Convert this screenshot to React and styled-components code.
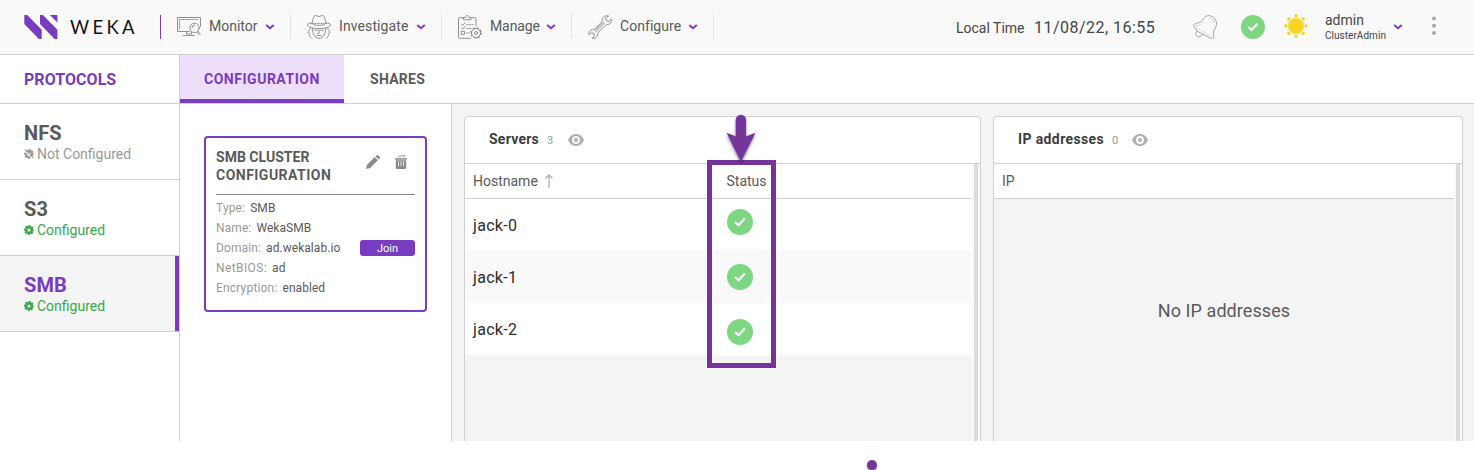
import React from "react";
import styled, { createGlobalStyle, css } from "styled-components";

const purple = "#793cc0";
const line = "#d0d0d0";

const Global = createGlobalStyle`
  *, *::before, *::after { box-sizing: border-box; }
  body {
    margin: 0;
    background: #fff;
    color: #5a5a5a;
    font-family: Roboto, "Liberation Sans", sans-serif;
    font-size: 14px;
    overflow: hidden;
  }
  svg { display: block; flex: none; }
`;

const Page = styled.div`
  position: relative;
  width: 1474px;
  height: 470px;
  overflow: hidden;
`;

/* ---------- top bar ---------- */
const TopBar = styled.header`
  display: flex;
  align-items: flex-start;
  height: 55px;
  background: #f9f9f9;
  border-bottom: 1px solid ${line};
`;
const Brand = styled.div`
  display: flex;
  width: 160px;
  padding: 15px 0 0 24px;
`;
const Wordmark = styled.span`
  margin: 0 0 0 12px;
  font: 400 18.5px/24px Lato, sans-serif;
  letter-spacing: 3.3px;
  color: #111;
`;
const BrandRule = styled.i`
  width: 1px;
  height: 24px;
  margin-top: 15px;
  background: ${purple};
`;
const NavItem = styled.div`
  display: flex;
  align-items: center;
  width: ${(p) => p.$width}px;
  height: 25px;
  margin-top: 14px;
  padding-left: 16px;
  border-right: 1px solid #e2e2e2;
`;
const NavLabel = styled.span`
  width: ${(p) => p.$width}px;
  margin-left: 8px;
  padding-bottom: 2px;
  line-height: 18px;
  white-space: nowrap;
  letter-spacing: ${(p) => p.$track || 0}px;
`;
const Clock = styled.div`
  display: flex;
  align-items: baseline;
  margin: 17px 0 0 242px;
  width: 236px;
  line-height: 22px;
  color: #464646;
  white-space: nowrap;
`;
const ClockLabel = styled.span`
  width: 78px;
`;
const ClockTime = styled.span`
  font-size: 16px;
  letter-spacing: 0.47px;
`;
const Tools = styled.div`
  display: flex;
  padding-top: 15px;
`;
const User = styled.div`
  width: 68px;
  margin: -4px 0 0 17px;
  color: #464646;
`;
const UserName = styled.div`
  font-size: 14px;
  line-height: 18px;
`;
const UserRole = styled.div`
  font-size: 10px;
  line-height: 13px;
  letter-spacing: 0.04px;
`;
const Spot = styled.span`
  margin: ${(p) => p.$m};
`;

/* ---------- body ---------- */
const Body = styled.div`
  display: flex;
  height: 386px;
`;
const Sidebar = styled.nav`
  width: 180px;
  border-right: 1px solid ${line};
`;
const SideTitle = styled.div`
  height: 49px;
  padding-left: 24px;
  border-bottom: 1px solid ${line};
  font-size: 16px;
  font-weight: 700;
  line-height: 49px;
  color: ${purple};
  letter-spacing: 0.05px;
`;
const Protocol = styled.div`
  height: 76px;
  padding: 17px 0 0 24px;
  border-bottom: 1px solid ${line};
  ${(p) => p.$active && css`
    background: #f4f4f4;
    box-shadow: inset -4px 0 0 ${purple};
  `}
`;
const ProtocolName = styled.div`
  font-size: 20px;
  font-weight: 700;
  line-height: 24px;
  color: ${(p) => (p.$active ? purple : "#5a5a5a")};
  letter-spacing: 0.1px;
`;
const ProtocolState = styled.div`
  display: flex;
  align-items: center;
  gap: 3px;
  line-height: 18px;
  color: ${(p) => (p.$on ? "#37a849" : "#999")};
`;
const Content = styled.main`
  flex: 1;
  display: flex;
  flex-direction: column;
`;
const Tabs = styled.div`
  display: flex;
  height: 49px;
  border-bottom: 1px solid ${line};
`;
const Tab = styled.div`
  height: 48px;
  width: ${(p) => p.$width}px;
  padding-left: ${(p) => p.$pad}px;
  font-weight: 700;
  line-height: 49px;
  letter-spacing: ${(p) => p.$track}px;
  ${(p) => p.$active && css`
    background: #eddffb;
    color: ${purple};
    box-shadow: inset 0 -4px 0 ${purple};
  `}
`;
const Split = styled.div`
  display: flex;
  flex: 1;
`;
const ConfigColumn = styled.section`
  width: 272px;
  padding: 32px 0 0 24px;
  border-right: 1px solid ${line};
`;
const Card = styled.div`
  width: 223px;
  height: 176px;
  padding: 10px;
  border: 2px solid ${purple};
  border-radius: 4px;
`;
const CardHead = styled.div`
  display: flex;
  height: 47px;
  border-bottom: 1px solid #8b8b8b;
`;
const CardTitle = styled.div`
  width: 149px;
  font-weight: 700;
  line-height: 18px;
`;
const CardLine = styled.div`
  white-space: nowrap;
  letter-spacing: ${(p) => p.$track}px;
`;
const Field = styled.div`
  display: flex;
  align-items: center;
  gap: 5px;
  height: 20px;
  font-size: 12px;
  color: #999;
  white-space: nowrap;
`;
const Fields = styled.div`
  padding-top: 3px;
`;
const FieldName = styled.span`
  letter-spacing: ${(p) => p.$track}px;
`;
const FieldValue = styled.span`
  color: #5a5a5a;
  letter-spacing: 0.05px;
`;
const JoinButton = styled.button`
  width: 55px;
  height: 16px;
  margin-left: auto;
  padding: 1px 0 0;
  border: 0;
  border-radius: 3px;
  background: ${purple};
  color: #fff;
  font: 11px/15px Roboto, sans-serif;
`;
const Panels = styled.section`
  display: flex;
  flex: 1;
  gap: 12px;
  padding: 12px 11px 0 12px;
  background: #f4f4f4;
`;
const Panel = styled.div`
  width: ${(p) => p.$width}px;
  border: 1px solid ${line};
  border-bottom: 0;
  border-radius: 4px 4px 0 0;
`;
const PanelHead = styled.div`
  display: flex;
  align-items: center;
  height: 47px;
  padding-left: 24px;
  border-bottom: 1px solid ${line};
  border-radius: 4px 4px 0 0;
  background: #fff;
`;
const PanelTitle = styled.span`
  width: ${(p) => p.$width}px;
  padding-bottom: 2px;
  font-weight: 700;
  color: #3c3c3c;
  letter-spacing: ${(p) => p.$track}px;
`;
const Count = styled.span`
  width: ${(p) => p.$width}px;
  padding-top: 1px;
  font-size: 11px;
  color: #999;
`;
const Scroller = styled.div`
  display: flex;
  height: 277px;
  padding-right: 2px;
  background: #fafafa;
`;
const Table = styled.div`
  flex: 1;
  background: #f4f4f4;
`;
const Track = styled.i`
  width: 4px;
  margin-left: 2px;
  background: #dcdcdc;
`;
const HeadRow = styled.div`
  display: flex;
  align-items: center;
  height: 35px;
  padding-left: 8px;
  border-bottom: 1px solid ${line};
  background: #fff;
`;
const HeadCell = styled.span`
  display: flex;
  align-items: center;
  gap: 7px;
  width: ${(p) => p.$width}px;
`;
const Row = styled.div`
  height: 52px;
  padding-left: 8px;
  background: ${(p) => (p.$alt ? "#f9f9f9" : "#fff")};
  font-size: 16px;
  line-height: 54px;
  color: #2c2c2c;
  letter-spacing: 0.3px;
`;
const Empty = styled.div`
  padding: 99px 0 0 0;
  font-size: 18px;
  line-height: 26px;
  text-align: center;
  letter-spacing: 0.08px;
`;

/* ---------- callouts laid over the page ---------- */
const Highlight = styled.div`
  position: absolute;
  left: 707px;
  top: 160px;
  width: 69px;
  height: 208px;
  padding: 34px 0 0 3px;
  border: 5px solid #76349b;
`;
const StatusCell = styled.div`
  width: 50px;
  height: ${(p) => p.$height}px;
  padding: ${(p) => p.$top}px 0 0 12px;
  background: ${(p) => (p.$alt ? "#f9f9f9" : "#fff")};
`;
const Arrow = styled.div`
  position: absolute;
  left: 721px;
  top: 110px;
`;
const Dot = styled.i`
  position: absolute;
  left: 867px;
  top: 460px;
  width: 10px;
  height: 10px;
  border-radius: 50%;
  background: #76349b;
  box-shadow: 0 2px 3px rgba(0, 0, 0, 0.4);
`;

/* ---------- icons ---------- */
const Logo = () => (
  <svg width="34" height="24" viewBox="0 0 34 24" fill={purple}>
    <path d="M0.3 0H3.2L17.7 14.800V24H14.900L0.3 8.900Z" />
    <path d="M16 0H18.900L33.400 14.800V24H30.600L16 8.900Z" />
    <path d="M25.900 0H33.400V7.500Z" />
  </svg>
);
const Chevron = () => (
  <svg width="10" height="8" viewBox="0 0 10 8" fill="none" stroke={purple} strokeWidth="2">
    <path d="M1.2 1.9 5 5.2 8.8 1.9" />
  </svg>
);
const thin = { fill: "none", stroke: "#858585", strokeWidth: 0.9, strokeLinecap: "round", strokeLinejoin: "round" };
const MonitorIcon = () => (
  <svg width="24" height="24" viewBox="0 0 24 24" {...thin}>
    <path d="M12.200 16.500H.5V2.500h23v9M9.500 16.500v2.500h5v-2M6.500 20.500h11" />
    <path d="M2.500 14V4.500h19" strokeDasharray="1 1.200" />
    <circle cx="17.500" cy="12.900" r="4.700" />
    <path d="M14.900 12.700a2.700 2.700 0 0 1 2.700-2.500M20.900 16.300l2.600 2.600-.9.900-2.600-2.600" />
  </svg>
);
const SpyIcon = () => (
  <svg width="24" height="24" viewBox="0 0 24 24" {...thin}>
    <path d="M4.9 8.3C6 5 6.200 .6 8.500 .5c1.500 0 2 1 3.500 1S14 .5 15.500 .5C17.800 .6 18 5 19.100 8.300M4.900 8.300C3 7.600 .5 8.500 .5 10c0 2 5 3.600 11.500 3.600S23.500 12 23.500 10c0-1.500-2.500-2.400-4.400-1.700M4.900 8.300c1 2.900 13.200 2.900 14.200 0" />
    <path d="M6.300 8.400h11.500" strokeDasharray=".8 1.200" />
    <path d="M5.500 13.300c0 6 2.300 10.100 6.500 10.100s6.500-4.100 6.500-10.100M7.700 15.200h2.600M13.700 15.200h2.600M12 15v3.500h-1.200M9.700 20.600h4.600M3.300 13c-.2 2.500-2 3.500-2.500 4.300 1.200.2 1.700.4 1.400 1.400-.3 1.200.4 2.300 2 4.400M20.700 13c.2 2.500 2 3.500 2.500 4.300-1.200.2-1.700.4-1.400 1.400.3 1.200-.4 2.300-2 4.400" />
  </svg>
);
const ClipboardIcon = () => (
  <svg width="24" height="24" viewBox="0 0 24 24" {...thin}>
    <path d="M12.500 23.300H1.500a1 1 0 0 1-1-1V3.700a1 1 0 0 1 1-1h4M13 2.700h4a1 1 0 0 1 1 1v7.200M5.500 4.300V2.500h2C7.500 1.300 8.200.5 9.200.5s1.700.8 1.700 2h2v1.800z" />
    <path d="M3.500 9.200l1.200 1.100 2.400-2.500M3.500 13l1.200 1.100 2.400-2.500M3.600 16.300h3v3h-3z" />
    <path d="M8.500 9.700h7M8.500 13.500h4.500M8.500 18h3" strokeDasharray=".8 1.200" />
    <circle cx="18" cy="18" r="4.500" />
    <circle cx="18" cy="18" r="1.500" />
    <circle cx="18" cy="18" r="5.200" strokeDasharray="2 2.080" strokeWidth="1.200" strokeLinecap="butt" />
  </svg>
);
const WrenchIcon = () => (
  <svg width="24" height="24" viewBox="0 0 24 24" {...thin}>
    <path d="M20.200.9c-2.300-.8-5.500.5-5.700 3.300-.1 1-.1 1.800-.5 2.400L6.800 14c-.7.500-1.500.4-2.300.5-2.600.2-4.300 3-3.600 5.200l2.300-1.900 2.600.6.700 2.400-2.300 2.300c2.700.8 5.300-.8 5.700-3.500.1-.9 0-1.800.6-2.400l7-7c.7-.6 1.500-.5 2.400-.6 2.600-.4 4-3.200 3.400-5.600L21 6.400l-2.600-.7-.8-2.400z" />
    <path d="M7.800 16.700l8.700-8.700M6.800 15.500l8.500-8.500" />
  </svg>
);
const Bell = () => (
  <svg width="24" height="24" viewBox="0 0 24 24" fill="none" stroke="#a2a2a2" strokeWidth="1" strokeLinejoin="round">
    <path d="M1.500 9.200C.3 9.800.2 11 .9 11.700l4.200 5.100 12.700 6.400c1 .5 2.400.5 2.700-.6.600-2.200-.5-4.600.4-7 .7-1.800 2.500-3.400 2.700-6.200C23.900 5 20.300.8 15.600.6c-2.500-.1-4.500 2.200-6.300 4.800C7.500 7.900 4 8 1.500 9.200Z" />
    <path d="M4.200 16a3.200 3.200 0 1 0 5 2.900" />
    <path d="M3 10.800c3-1 5.500-.5 8-4M16.500 3c2.500.5 4 2 4.500 4.500M4 12.800l13 8" strokeDasharray="1 1.500" strokeWidth=".8" />
  </svg>
);
const Check = ({ size }) => (
  <svg width={size} height={size} viewBox="0 0 24 24">
    <circle cx="12" cy="12" r="12" fill="#7dd780" />
    <path d="M7.500 12 10.700 15 16.500 8.700" fill="none" stroke="#fff" strokeWidth="2" />
  </svg>
);
const Sun = () => (
  <svg width="24" height="24" viewBox="0 0 24 24" fill="#f8d423">
    <circle cx="12" cy="12" r="8" />
    {[[12, 1.800], [19.200, 4.800], [22.200, 12], [19.200, 19.200], [12, 22.200], [4.800, 19.200], [1.800, 12], [4.800, 4.800]].map(([x, y]) => (
      <circle key={`${x}-${y}`} cx={x} cy={y} r="1.700" />
    ))}
  </svg>
);
const Kebab = () => (
  <svg width="4" height="20" viewBox="0 0 4 20" fill="#a8a8a8">
    <circle cx="2" cy="2.500" r="2" />
    <circle cx="2" cy="9.800" r="2" />
    <circle cx="2" cy="17" r="2" />
  </svg>
);
const Gear = ({ off }) => (
  <svg width="10" height="10" viewBox="0 0 10 10" fill="none">
    <circle cx="5" cy="5" r="2.800" stroke="currentColor" strokeWidth="2.400" />
    <circle cx="5" cy="5" r="4.200" stroke="currentColor" strokeWidth="1.600" strokeDasharray="1.900 1.399" strokeDashoffset=".95" />
    {off && <path d="M0 1.200 9 10" stroke="#fff" strokeWidth="1.200" />}
    {off && <path d="M.4 0 10 9.500" stroke="currentColor" strokeWidth="1" />}
  </svg>
);
const Pencil = () => (
  <svg width="14" height="14" viewBox="0 0 14 14" fill="#8a8a8a">
    <path d="M0 14 .9 9.900 8.700 2.100l3.200 3.200L4.100 13.100ZM9.500 1.300 10.400.5C11 0 11.800 0 12.400.5l1.100 1.100c.6.600.6 1.400 0 2l-.8.900Z" />
  </svg>
);
const Trash = () => (
  <svg width="12" height="14" viewBox="0 0 12 14" fill="#8a8a8a">
    <path d="M0 3.300h12v1.500H0zM.8 5.200h10.400v7.300c0 .8-.6 1.500-1.500 1.500H2.300c-.9 0-1.500-.7-1.500-1.500z" />
    <path d="M2.500 2.400C4 .8 8.500.2 10.500.8M8 2.500l1.500-.8" fill="none" stroke="#8a8a8a" strokeWidth=".9" />
    <path d="M3.500 6.400v4.800M6 6.400v4.800M8.500 6.400v4.800" stroke="#fff" strokeWidth=".8" />
  </svg>
);
const Eye = () => (
  <svg width="16" height="12" viewBox="0 0 16 12">
    <path d="M0 6C1.500 2.200 4.500 0 8 0s6.500 2.200 8 6c-1.500 3.800-4.500 6-8 6S1.500 9.800 0 6Z" fill="#b0b0b0" />
    <circle cx="8" cy="6" r="3.900" fill="#fff" />
    <circle cx="8" cy="6" r="2" fill="#b0b0b0" />
  </svg>
);
const SortUp = () => (
  <svg width="8" height="14" viewBox="0 0 8 14" fill="none" stroke="#aaa" strokeWidth="1.200">
    <path d="M4 14V1M.5 4.500 4 .9 7.500 4.500" />
  </svg>
);
const ArrowDown = () => (
  <svg width="40" height="56" viewBox="0 0 40 56">
    <defs>
      <filter id="soft" x="-30%" y="-20%" width="160%" height="140%">
        <feDropShadow dx="0" dy="2" stdDeviation="1.500" floodOpacity=".45" />
      </filter>
    </defs>
    <path filter="url(#soft)" fill="#76349b" d="M14.700 10a5.200 5.200 0 0 1 10.400 0V26.300L34.500 22.800 19.900 52 5.500 22.800 14.700 26.300Z" />
  </svg>
);

const nav = [
  { name: "Monitor", Icon: MonitorIcon, width: 130, label: 56, track: 0 },
  { name: "Investigate", Icon: SpyIcon, width: 151, label: 77, track: 0.1 },
  { name: "Manage", Icon: ClipboardIcon, width: 130, label: 56, track: -0.1 },
  { name: "Configure", Icon: WrenchIcon, width: 142, label: 68, track: 0.05 },
];

const fields = [
  { name: "Type:", value: "SMB", track: 0.15 },
  { name: "Name:", value: "WekaSMB", track: 0.1 },
  { name: "Domain:", value: "ad.wekalab.io", track: 0.12, action: "Join" },
  { name: "NetBIOS:", value: "ad", track: 0.4 },
  { name: "Encryption:", value: "enabled", track: 0.18 },
];

export default function App() {
  return (
    <Page>
      <Global />
      <TopBar>
        <Brand>
          <Logo />
          <Wordmark>WEKA</Wordmark>
        </Brand>
        <BrandRule />
        {nav.map(({ name, Icon, width, label, track }) => (
          <NavItem key={name} $width={width}>
            <Icon />
            <NavLabel $width={label} $track={track}>{name}</NavLabel>
            <Chevron />
          </NavItem>
        ))}
        <Clock>
          <ClockLabel>Local Time</ClockLabel>
          <ClockTime>11/08/22, 16:55</ClockTime>
        </Clock>
        <Tools>
          <Spot $m="0 0 0 1px"><Bell /></Spot>
          <Spot $m="0 0 0 24px"><Check size={24} /></Spot>
          <Spot $m="-1px 0 0 19px"><Sun /></Spot>
          <User>
            <UserName>admin</UserName>
            <UserRole>ClusterAdmin</UserRole>
          </User>
          <Spot $m="8px 0 0 0"><Chevron /></Spot>
          <Spot $m="1px 0 0 29px"><Kebab /></Spot>
        </Tools>
      </TopBar>
      <Body>
        <Sidebar>
          <SideTitle>PROTOCOLS</SideTitle>
          <Protocol>
            <ProtocolName>NFS</ProtocolName>
            <ProtocolState><Gear off />Not Configured</ProtocolState>
          </Protocol>
          <Protocol>
            <ProtocolName>S3</ProtocolName>
            <ProtocolState $on><Gear />Configured</ProtocolState>
          </Protocol>
          <Protocol $active>
            <ProtocolName $active>SMB</ProtocolName>
            <ProtocolState $on><Gear />Configured</ProtocolState>
          </Protocol>
        </Sidebar>
        <Content>
          <Tabs>
            <Tab $active $width={164} $pad={24} $track={0.52}>CONFIGURATION</Tab>
            <Tab $width={120} $pad={26} $track={0.28}>SHARES</Tab>
          </Tabs>
          <Split>
            <ConfigColumn>
              <Card>
                <CardHead>
                  <CardTitle>
                    <CardLine $track={0.02}>SMB CLUSTER</CardLine>
                    <CardLine $track={0.48}>CONFIGURATION</CardLine>
                  </CardTitle>
                  <Spot $m="7px 0 0 1px"><Pencil /></Spot>
                  <Spot $m="7px 0 0 15px"><Trash /></Spot>
                </CardHead>
                <Fields>
                  {fields.map(({ name, value, track, action }) => (
                    <Field key={name}>
                      <FieldName $track={track}>{name}</FieldName>
                      <FieldValue>{value}</FieldValue>
                      {action && <JoinButton>{action}</JoinButton>}
                    </Field>
                  ))}
                </Fields>
              </Card>
            </ConfigColumn>
            <Panels>
              <Panel $width={517}>
                <PanelHead>
                  <PanelTitle $width={58} $track={0.25}>Servers</PanelTitle>
                  <Count $width={21}>3</Count>
                  <Eye />
                </PanelHead>
                <Scroller>
                  <Table>
                    <HeadRow>
                      <HeadCell $width={253.5}>Hostname<SortUp /></HeadCell>
                      <HeadCell $width={80}>Status</HeadCell>
                    </HeadRow>
                    <Row>jack-0</Row>
                    <Row $alt>jack-1</Row>
                    <Row>jack-2</Row>
                  </Table>
                  <Track />
                </Scroller>
              </Panel>
              <Panel $width={470}>
                <PanelHead>
                  <PanelTitle $width={94} $track={0.38}>IP addresses</PanelTitle>
                  <Count $width={20}>0</Count>
                  <Eye />
                </PanelHead>
                <Scroller>
                  <Table>
                    <HeadRow>
                      <HeadCell $width={80}>IP</HeadCell>
                    </HeadRow>
                    <Empty>No IP addresses</Empty>
                  </Table>
                  <Track />
                </Scroller>
              </Panel>
            </Panels>
          </Split>
        </Content>
      </Body>
      <Highlight>
        <StatusCell $height={51} $top={10}><Check size={26} /></StatusCell>
        <StatusCell $height={54} $top={14} $alt><Check size={26} /></StatusCell>
        <StatusCell $height={52} $top={15}><Check size={26} /></StatusCell>
      </Highlight>
      <Arrow><ArrowDown /></Arrow>
      <Dot />
    </Page>
  );
}
